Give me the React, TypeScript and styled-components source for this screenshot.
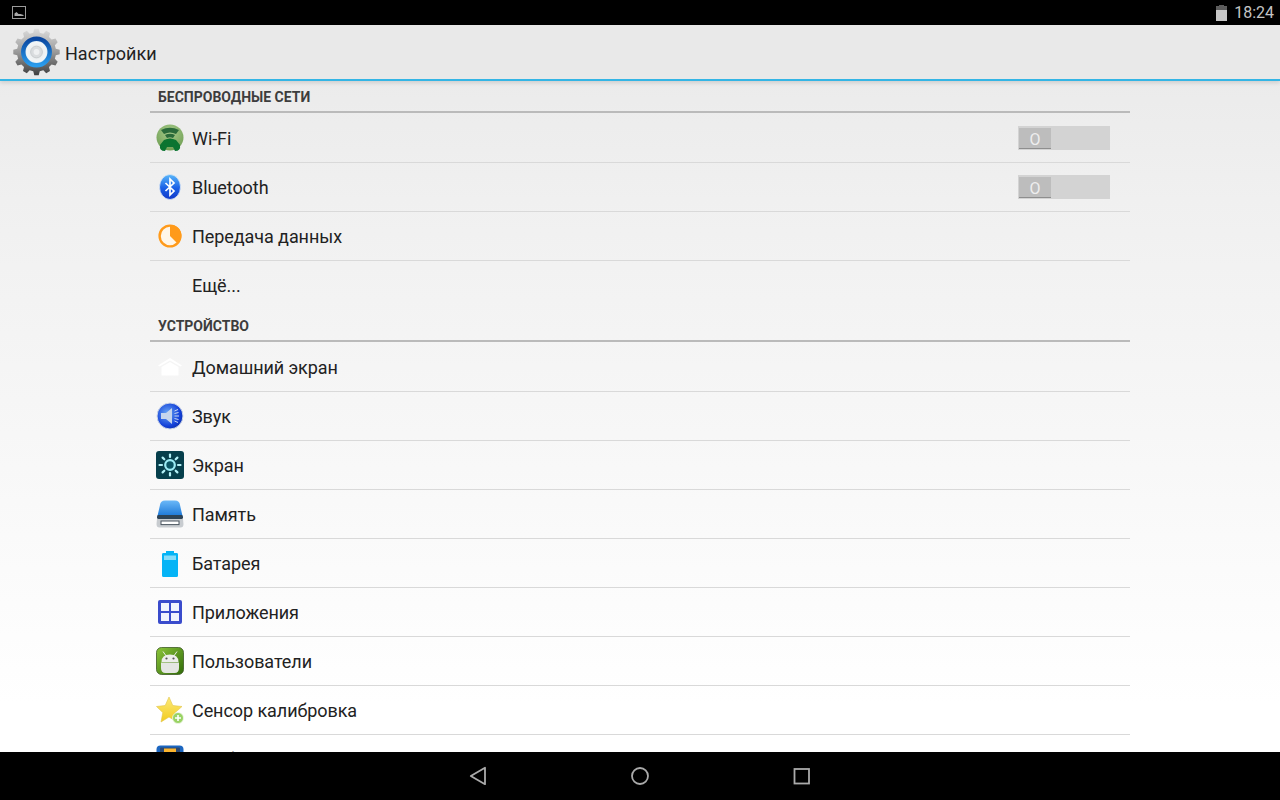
import React from 'react';
import styled, { createGlobalStyle } from 'styled-components';

interface SettingItem {
  title: string;
  icon?: React.ReactNode;
  toggle?: boolean;
  noBorder?: boolean;
}

const GlobalStyle = createGlobalStyle`
  html, body {
    margin: 0;
    padding: 0;
    background: #000;
  }
  body {
    font-family: Roboto, "Noto Sans", "Liberation Sans", sans-serif;
  }
`;

const Screen = styled.div`
  display: flex;
  flex-direction: column;
  width: 1280px;
  height: 800px;
  overflow: hidden;
  background: linear-gradient(180deg, #e8e8e8 0%, #f0f0f0 25%, #f6f6f6 50%, #ffffff 88%, #ffffff 100%);
`;

const StatusBar = styled.div`
  display: flex;
  flex: 0 0 25px;
  align-items: center;
  justify-content: space-between;
  padding: 0 6px 0 12px;
  background: #000;
`;

const StatusRight = styled.div`
  display: flex;
  align-items: center;
  gap: 7px;
`;

const Clock = styled.span`
  color: #c4c4c4;
  font-size: 16px;
  line-height: 25px;
`;

const ActionBar = styled.header`
  position: relative;
  z-index: 1;
  display: flex;
  flex: 0 0 56px;
  box-sizing: border-box;
  align-items: center;
  gap: 5px;
  padding: 0 0 0 13px;
  background: #e9e9e9;
  border-bottom: 2px solid #33b5e5;
  box-shadow: 0 2px 4px rgba(0, 0, 0, 0.12);
`;

const ActionTitle = styled.h1`
  margin: 0;
  padding-top: 2px;
  color: #222;
  font-size: 18px;
  font-weight: 400;
`;

const Content = styled.main`
  flex: 1 1 auto;
  min-height: 0;
  overflow: hidden;
  padding: 0 150px;
`;

const SectionHeader = styled.h2`
  display: flex;
  box-sizing: border-box;
  align-items: center;
  height: 32px;
  margin: 0 0 1px;
  padding: 1px 8px 0;
  color: #3d3d3d;
  font-size: 14px;
  font-weight: 700;
  text-transform: uppercase;
  border-bottom: 2px solid #bababa;
`;

const Row = styled.div<{ $noBorder?: boolean }>`
  display: flex;
  box-sizing: border-box;
  align-items: center;
  gap: 8px;
  height: 49px;
  padding: 0 20px 0 6px;
  border-bottom: 1px solid ${({ $noBorder }) => ($noBorder ? 'transparent' : '#d9d9d9')};
`;

const IconSlot = styled.div`
  display: flex;
  flex: 0 0 28px;
  align-items: center;
  justify-content: center;
  width: 28px;
  height: 28px;
`;

const RowTitle = styled.span`
  flex: 1;
  color: #222;
  font-size: 18px;
  letter-spacing: -0.07px;
`;

const SwitchTrack = styled.div`
  display: flex;
  box-sizing: border-box;
  width: 92px;
  height: 24px;
  padding: 2px 1px 1px;
  background: #d3d3d3;
`;

const SwitchThumb = styled.div`
  display: flex;
  box-sizing: border-box;
  align-items: center;
  justify-content: center;
  width: 32px;
  height: 21px;
  padding-top: 2px;
  color: #eeeeee;
  font-size: 16px;
  background: #bdbdbd;
  border-bottom: 1px solid #8e8e8e;
`;

const NavBar = styled.nav`
  display: flex;
  flex: 0 0 48px;
  align-items: center;
  justify-content: center;
  background: #000;
`;

const NavButton = styled.div`
  display: flex;
  align-items: center;
  justify-content: center;
  width: 161px;
  height: 48px;
`;

const gearPoints = () => {
  const teeth = 12;
  const pts: string[] = [];
  for (let i = 0; i < teeth; i++) {
    const a = (i / teeth) * Math.PI * 2;
    const step = (Math.PI * 2) / teeth;
    const add = (r: number, t: number) =>
      pts.push(`${(24 + r * Math.cos(t)).toFixed(2)},${(24 + r * Math.sin(t)).toFixed(2)}`);
    add(20, a - step * 0.32);
    add(23.8, a - step * 0.18);
    add(23.8, a + step * 0.18);
    add(20, a + step * 0.32);
  }
  return pts.join(' ');
};

const GearLogo = () => (
  <svg width="47" height="48" viewBox="0 0 48 48">
    <defs>
      <linearGradient id="gearFill" x1="0" y1="0" x2="0" y2="1">
        <stop offset="0" stopColor="#dcdcdc" />
        <stop offset="0.5" stopColor="#9a9a9a" />
        <stop offset="1" stopColor="#3f3f3f" />
      </linearGradient>
      <linearGradient id="gearRing" x1="0" y1="0" x2="0" y2="1">
        <stop offset="0" stopColor="#0a47a0" />
        <stop offset="1" stopColor="#2a9cec" />
      </linearGradient>
      <radialGradient id="gearCore">
        <stop offset="0" stopColor="#dfe3e6" />
        <stop offset="0.72" stopColor="#f2f5f6" />
        <stop offset="1" stopColor="#c3e4f6" />
      </radialGradient>
    </defs>
    <polygon points={gearPoints()} fill="url(#gearFill)" />
    <circle cx="24" cy="24" r="13.5" fill="url(#gearCore)" stroke="url(#gearRing)" strokeWidth="4.6" />
    <circle cx="24" cy="24" r="6" fill="#d9dcde" stroke="#c8ccce" />
    <circle cx="24" cy="24" r="3" fill="#eef0f1" />
  </svg>
);

const PictureStatus = () => (
  <svg width="14" height="13" viewBox="0 0 14 13">
    <rect x="0.5" y="0.5" width="13" height="12" fill="none" stroke="#9a9a9a" />
    <path d="M2.5 10 L2.5 7.5 L4.5 6 L6.5 8 L8.5 8 L11.5 9 L11.5 10 Z" fill="#a8a8a8" />
  </svg>
);

const BatteryStatus = () => (
  <svg width="11" height="16" viewBox="0 0 11 16">
    <path d="M3 0 H8 V1.5 H11 V16 H0 V1.5 H3 Z" fill="#c6c6c6" />
    <path d="M3 0 H8 V1.5 H11 V5 H0 V1.5 H3 Z" fill="#5c5c5c" />
  </svg>
);

const WifiIcon = () => (
  <svg width="28" height="28" viewBox="0 0 28 28">
    <defs>
      <radialGradient id="wifiBg" cx="0.5" cy="0.3" r="0.75">
        <stop offset="0" stopColor="#a8cc8c" />
        <stop offset="1" stopColor="#6c9c50" />
      </radialGradient>
    </defs>
    <ellipse cx="14" cy="13.5" rx="13.5" ry="13" fill="url(#wifiBg)" />
    <path d="M5 6 Q14 1.5 23 6 L20 10 Q14 7 8 10 Z" fill="#2a6a3a" />
    <path d="M9 11 Q14 8.5 19 11 L17 14 Q14 12.5 11 14 Z" fill="#2a6a3a" />
    <path d="M11.5 15 Q14 14 16.5 15 L14 18 Z" fill="#2a6a3a" />
    <path d="M8 16 Q14 13.5 20 16 L24 21 Q25 27 19 27 L17 23 L11 23 L9 27 Q3 27 4 21 Z" fill="#0a7430" />
  </svg>
);

const BluetoothIcon = () => (
  <svg width="28" height="28" viewBox="0 0 28 28">
    <defs>
      <linearGradient id="btBg" x1="0" y1="0" x2="0" y2="1">
        <stop offset="0" stopColor="#5ab8fa" />
        <stop offset="0.55" stopColor="#1a5fe6" />
        <stop offset="1" stopColor="#1238c8" />
      </linearGradient>
    </defs>
    <ellipse cx="14" cy="14" rx="10.5" ry="12.5" fill="url(#btBg)" stroke="#dbe7f5" strokeWidth="0.8" />
    <path d="M9.5 10 L18 18 L14 22 L14 6 L18 10 L9.5 18" fill="none" stroke="#fff" strokeWidth="1.7" />
  </svg>
);

const DataIcon = () => (
  <svg width="28" height="28" viewBox="0 0 28 28">
    <circle cx="14" cy="14" r="10.4" fill="#fff6e8" stroke="#ff9a1a" strokeWidth="2.4" />
    <path d="M14 3 L14 14 L21.5 21.5 A10.5 10.5 0 0 0 14 3 Z" fill="#ff9a1a" />
  </svg>
);

const HomeIcon = () => (
  <svg width="28" height="28" viewBox="0 0 28 28">
    <path d="M14 5 L26 12.5 L24.5 13.5 L14 7.5 L3.5 13.5 L2 12.5 Z" fill="#ffffff" />
    <path d="M5.5 14 L14 9 L22.5 14 L22.5 22.5 L5.5 22.5 Z" fill="#ffffff" />
  </svg>
);

const SoundIcon = () => (
  <svg width="28" height="28" viewBox="0 0 28 28">
    <defs>
      <radialGradient id="sndBg" cx="0.4" cy="0.4" r="0.7">
        <stop offset="0" stopColor="#6aa8f6" />
        <stop offset="0.7" stopColor="#1340d8" />
        <stop offset="1" stopColor="#0c2da0" />
      </radialGradient>
    </defs>
    <circle cx="14" cy="14" r="13" fill="url(#sndBg)" stroke="#cfd8e8" strokeWidth="1" />
    <path d="M5 11 H10 L16 6 V22 L10 17 H5 Z" fill="#c5d5ec" />
    <path d="M18.5 9 L22 7.5 M18.5 14 H23 M18.5 19 L22 20.5 M18.5 11.5 L22.5 10.5 M18.5 16.5 L22.5 17.5" stroke="#dce6f5" strokeWidth="0.9" />
  </svg>
);

const ScreenIcon = () => (
  <svg width="28" height="28" viewBox="0 0 28 28">
    <rect x="0" y="0" width="28" height="28" rx="3" fill="#063f4c" />
    <circle cx="14" cy="14" r="4.8" fill="#0a5564" stroke="#9becf5" strokeWidth="2.2" />
    <g stroke="#b4f2f8" strokeWidth="2.2" strokeLinecap="round">
      <path d="M14 3.5 V6" />
      <path d="M14 22 V24.5" />
      <path d="M3.5 14 H6" />
      <path d="M22 14 H24.5" />
      <path d="M6.6 6.6 L8.3 8.3" />
      <path d="M19.7 19.7 L21.4 21.4" />
      <path d="M6.6 21.4 L8.3 19.7" />
      <path d="M19.7 8.3 L21.4 6.6" />
    </g>
  </svg>
);

const MemoryIcon = () => (
  <svg width="28" height="28" viewBox="0 0 28 28">
    <defs>
      <linearGradient id="memTop" x1="0" y1="0" x2="0" y2="1">
        <stop offset="0" stopColor="#6ab8f8" />
        <stop offset="1" stopColor="#1c78d8" />
      </linearGradient>
    </defs>
    <path d="M4 5 Q4.5 0.5 9 0.5 H19 Q23.5 0.5 24 5 L26.5 16 H1.5 Z" fill="url(#memTop)" />
    <rect x="1" y="15" width="26" height="4" rx="1.5" fill="#2d4356" />
    <path d="M1 19 H27 L27.5 24 Q27.5 27.5 24.5 27.5 H3.5 Q0.5 27.5 0.5 24 Z" fill="#c8ccd0" />
    <rect x="5" y="21" width="18" height="3.6" fill="#ffffff" stroke="#4c5761" strokeWidth="1" />
  </svg>
);

const BatteryIcon = () => (
  <svg width="28" height="28" viewBox="0 0 28 28">
    <path d="M10 2 H18 V4 H21 Q22 4 22 5.5 V26.5 Q22 28 20.5 28 H7.5 Q6 28 6 26.5 V5.5 Q6 4 7 4 H10 Z" fill="#05b4f6" />
    <path d="M8 6.5 H20 V11 L8 11 Z" fill="#bfeefc" opacity="0.7" />
  </svg>
);

const AppsIcon = () => (
  <svg width="28" height="28" viewBox="0 0 28 28">
    <rect x="2" y="2" width="24" height="24" rx="2" fill="#3a4ccc" />
    <rect x="5" y="5" width="8" height="8" fill="#f2f4fd" />
    <rect x="15" y="5" width="8" height="8" fill="#f2f4fd" />
    <rect x="5" y="15" width="8" height="8" fill="#f2f4fd" />
    <rect x="15" y="15" width="8" height="8" fill="#f2f4fd" />
  </svg>
);

const UsersIcon = () => (
  <svg width="28" height="28" viewBox="0 0 28 28">
    <defs>
      <linearGradient id="usrBg" x1="0" y1="0" x2="1" y2="1">
        <stop offset="0" stopColor="#8cc63a" />
        <stop offset="1" stopColor="#2f6a08" />
      </linearGradient>
    </defs>
    <rect x="0.5" y="0.5" width="27" height="27" rx="5" fill="url(#usrBg)" stroke="#3d5a26" strokeWidth="0.8" />
    <path d="M7 4.5 L10.5 9.5 M21 4.5 L17.5 9.5" stroke="#eceeea" strokeWidth="1" />
    <path d="M5.5 15 Q5.5 7.5 14 7.5 Q22.5 7.5 22.5 15 Z" fill="#eceeea" />
    <circle cx="10.5" cy="11.5" r="1.1" fill="#555" />
    <circle cx="17.5" cy="11.5" r="1.1" fill="#555" />
    <path d="M5 15.5 H23 V21 Q23 26 18.5 26 H9.5 Q5 26 5 21 Z" fill="#e4e6e2" />
  </svg>
);

const StarIcon = () => (
  <svg width="28" height="28" viewBox="0 0 28 28">
    <defs>
      <linearGradient id="starFill" x1="0" y1="0" x2="0" y2="1">
        <stop offset="0" stopColor="#fdea7a" />
        <stop offset="1" stopColor="#f2cb1e" />
      </linearGradient>
    </defs>
    <path d="M13 1 L16.8 9.5 L26 10.5 L19.2 16.6 L21 26 L13 21 L5 26 L6.8 16.6 L0.5 10.5 L9.2 9.5 Z" fill="url(#starFill)" stroke="#e0c54a" strokeWidth="0.6" />
    <circle cx="22" cy="22" r="5.5" fill="#9ad364" stroke="#f3f8ec" strokeWidth="0.8" />
    <path d="M22 19 V25 M19 22 H25" stroke="#fff" strokeWidth="1.6" />
  </svg>
);

const FilmIcon = () => (
  <svg width="28" height="28" viewBox="0 0 28 28">
    <rect x="0.5" y="0.5" width="27" height="27" rx="4" fill="#1c66c0" />
    <rect x="4" y="2.5" width="20" height="23" rx="1" fill="#2b4870" />
    <rect x="8" y="3.5" width="12" height="8" fill="#fdb52e" />
    <rect x="8" y="14" width="12" height="8" fill="#fdb52e" />
  </svg>
);

const BackIcon = () => (
  <svg width="20" height="20" viewBox="0 0 20 20">
    <path d="M16 1.8 V18.2 L1.8 10 Z" fill="none" stroke="#aaaaaa" strokeWidth="1.8" strokeLinejoin="round" />
  </svg>
);

const HomeNavIcon = () => (
  <svg width="20" height="20" viewBox="0 0 20 20">
    <circle cx="10" cy="10" r="8" fill="none" stroke="#aaaaaa" strokeWidth="1.8" />
  </svg>
);

const RecentIcon = () => (
  <svg width="20" height="20" viewBox="0 0 20 20">
    <rect x="3.5" y="3" width="14.5" height="14.5" fill="none" stroke="#aaaaaa" strokeWidth="1.8" />
  </svg>
);

const wirelessItems: SettingItem[] = [
  { title: 'Wi-Fi', icon: <WifiIcon />, toggle: true },
  { title: 'Bluetooth', icon: <BluetoothIcon />, toggle: true },
  { title: 'Передача данных', icon: <DataIcon /> },
  { title: 'Ещё...', noBorder: true },
];

const deviceItems: SettingItem[] = [
  { title: 'Домашний экран', icon: <HomeIcon /> },
  { title: 'Звук', icon: <SoundIcon /> },
  { title: 'Экран', icon: <ScreenIcon /> },
  { title: 'Память', icon: <MemoryIcon /> },
  { title: 'Батарея', icon: <BatteryIcon /> },
  { title: 'Приложения', icon: <AppsIcon /> },
  { title: 'Пользователи', icon: <UsersIcon /> },
  { title: 'Сенсор калибровка', icon: <StarIcon /> },
  { title: 'Пробуждение', icon: <FilmIcon /> },
];

const SettingRow: React.FC<{ item: SettingItem }> = ({ item }) => (
  <Row $noBorder={item.noBorder}>
    <IconSlot>{item.icon}</IconSlot>
    <RowTitle>{item.title}</RowTitle>
    {item.toggle && (
      <SwitchTrack>
        <SwitchThumb>O</SwitchThumb>
      </SwitchTrack>
    )}
  </Row>
);

const App: React.FC = () => (
  <Screen>
    <GlobalStyle />
    <StatusBar>
      <PictureStatus />
      <StatusRight>
        <BatteryStatus />
        <Clock>18:24</Clock>
      </StatusRight>
    </StatusBar>
    <ActionBar>
      <GearLogo />
      <ActionTitle>Настройки</ActionTitle>
    </ActionBar>
    <Content>
      <SectionHeader>Беспроводные сети</SectionHeader>
      {wirelessItems.map((item) => (
        <SettingRow key={item.title} item={item} />
      ))}
      <SectionHeader>Устройство</SectionHeader>
      {deviceItems.map((item) => (
        <SettingRow key={item.title} item={item} />
      ))}
    </Content>
    <NavBar>
      <NavButton>
        <BackIcon />
      </NavButton>
      <NavButton>
        <HomeNavIcon />
      </NavButton>
      <NavButton>
        <RecentIcon />
      </NavButton>
    </NavBar>
  </Screen>
);

export default App;
